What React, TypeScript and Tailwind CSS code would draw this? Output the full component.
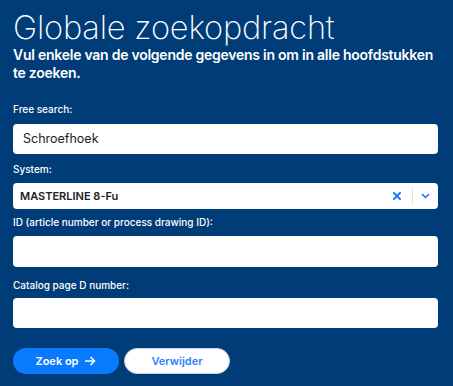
import React from "react";

const font = { fontFamily: "Inter, 'Noto Sans', sans-serif" };

function Label({ children, className = "" }: { children: React.ReactNode; className?: string }) {
  return (
    <div className={"text-[10px] leading-[12px] font-medium text-white " + className}>{children}</div>
  );
}

export default function App() {
  return (
    <div className="w-[453px] h-[386px] bg-[#003c78] overflow-hidden pl-[13px] pr-[15px]" style={font}>
      <h1 className="text-[32.6px] leading-[36px] font-extralight text-white pt-[9px] tracking-[-0.2px]">
        Globale zoekopdracht
      </h1>
      <p className="text-[14px] leading-[18px] font-semibold text-white mt-[1px] tracking-[-0.25px]">
        Vul enkele van de volgende gegevens in om in alle hoofdstukken te zoeken.
      </p>
      <Label className="mt-[21px]">Free search:</Label>
      <div className="mt-[9px] h-[30px] bg-white rounded-[4px] flex items-center pl-[10px] text-[12.5px] text-[#222]">
        Schroefhoek
      </div>
      <Label className="mt-[9px]">System:</Label>
      <div className="mt-[8px] h-[26px] bg-white rounded-[4px] flex items-center">
        <div className="flex-1 pl-[7px] text-[11px] font-semibold text-[#222]">MASTERLINE 8-Fu</div>
        <div className="w-[30px] flex justify-center">
          <svg width="8" height="8" viewBox="0 0 8 8">
            <path d="M1 1L7 7M7 1L1 7" stroke="#1a7cf0" strokeWidth="2" strokeLinecap="square" />
          </svg>
        </div>
        <div className="w-px h-[18px] bg-[#e2e2e2]" />
        <div className="w-[25px] flex justify-center">
          <svg width="9" height="6" viewBox="0 0 9 6">
            <path d="M1 1.2L4.5 4.5L8 1.2" stroke="#1a7cf0" strokeWidth="1.6" fill="none" />
          </svg>
        </div>
      </div>
      <Label className="mt-[7px]">ID (article number or process drawing ID):</Label>
      <div className="mt-[8px] h-[31px] bg-white rounded-[4px]" />
      <Label className="mt-[12px]">Catalog page D number:</Label>
      <div className="mt-[7px] h-[30px] bg-white rounded-[4px]" />
      <div className="mt-[20px] flex gap-[5px]">
        <button className="w-[106px] h-[26px] rounded-full bg-[#0a7bff] text-white text-[11px] font-semibold flex items-center justify-center gap-[6px]">
          Zoek op
          <svg width="12" height="10" viewBox="0 0 12 10">
            <path d="M1 5H10.5M6.5 1L10.5 5L6.5 9" stroke="white" strokeWidth="1.5" fill="none" />
          </svg>
        </button>
        <button className="w-[106px] h-[26px] rounded-full bg-white border border-[#c8d2de] text-[#2a7fff] text-[11px] font-semibold flex items-center justify-center">
          Verwijder
        </button>
      </div>
    </div>
  );
}
